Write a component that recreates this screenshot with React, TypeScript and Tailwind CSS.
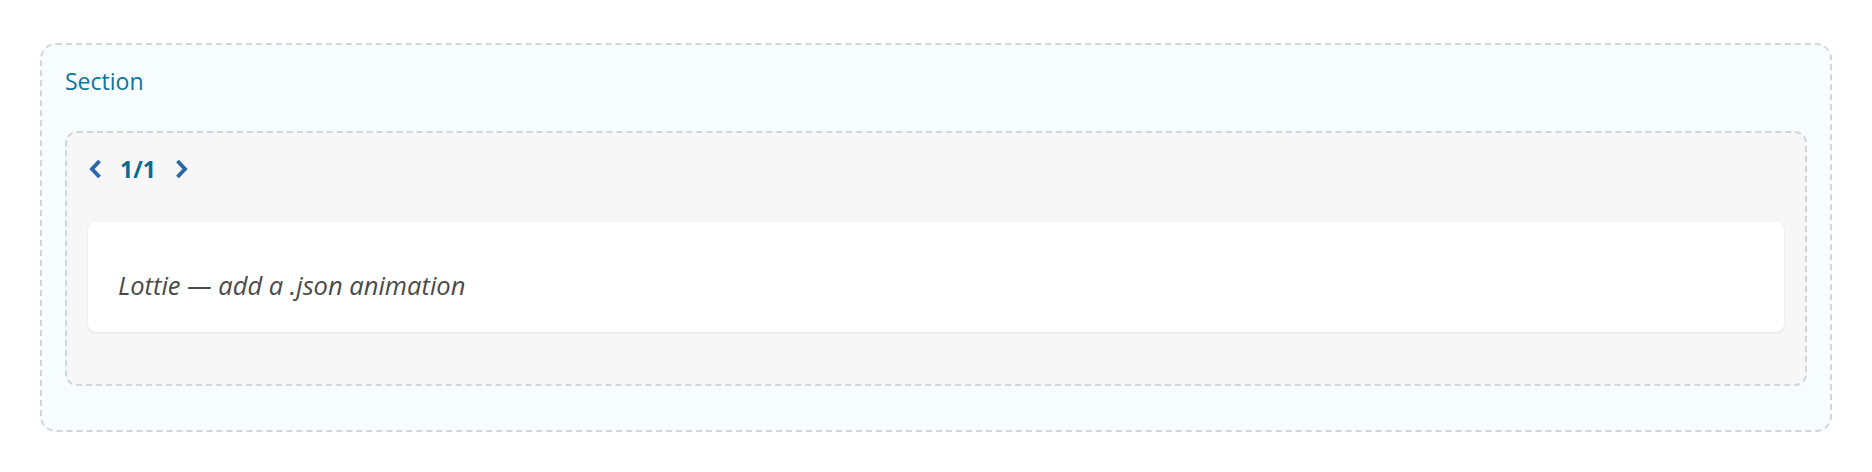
function Chevron({ dir }: { dir: "left" | "right" }) {
  return (
    <svg width="15" height="22" viewBox="0 0 15 22" className="text-[#2868aa]">
      <polyline
        points={dir === "left" ? "11.5,3 4,11 11.5,19" : "3.5,3 11,11 3.5,19"}
        fill="none"
        stroke="currentColor"
        strokeWidth="3.9"
        strokeLinecap="butt"
        strokeLinejoin="miter"
      />
    </svg>
  );
}

export default function App() {
  return (
    <div className="w-full h-[472px] bg-white px-[40px] pt-[43px] font-['Open_Sans',sans-serif]">

      {/* SECTION */}

      <div className="rounded-[16px] border-2 border-dashed border-[#d3d6d9] bg-[#f7fcfe] px-[23px] pt-[20px] pb-[44px]">

        <div className="text-[23px] leading-[32px] text-[#0b76a0]">
          Section
        </div>

        {/* CAROUSEL */}

        <div className="mt-[34px] rounded-[12px] border-2 border-dashed border-[#d3d6d9] bg-[#f7f7f7] px-[21px] pt-[23px] pb-[52px]">

          <div className="flex items-center h-[26px]">
            <button className="flex items-center">
              <Chevron dir="left" />
            </button>

            <span className="ml-[17px] text-[23px] font-bold leading-[26px] text-[#0d6b92]">
              1/1
            </span>

            <button className="ml-[18px] flex items-center">
              <Chevron dir="right" />
            </button>
          </div>

          <div className="mt-[40px] h-[110px] rounded-[8px] bg-white shadow-[0_1px_3px_rgba(0,0,0,0.08)] px-[30px] pt-[46px]">
            <div className="text-[25.5px] leading-[34px] italic text-[#4a4a4a]">
              Lottie — add a .json animation
            </div>
          </div>

        </div>

      </div>

    </div>
  );
}
